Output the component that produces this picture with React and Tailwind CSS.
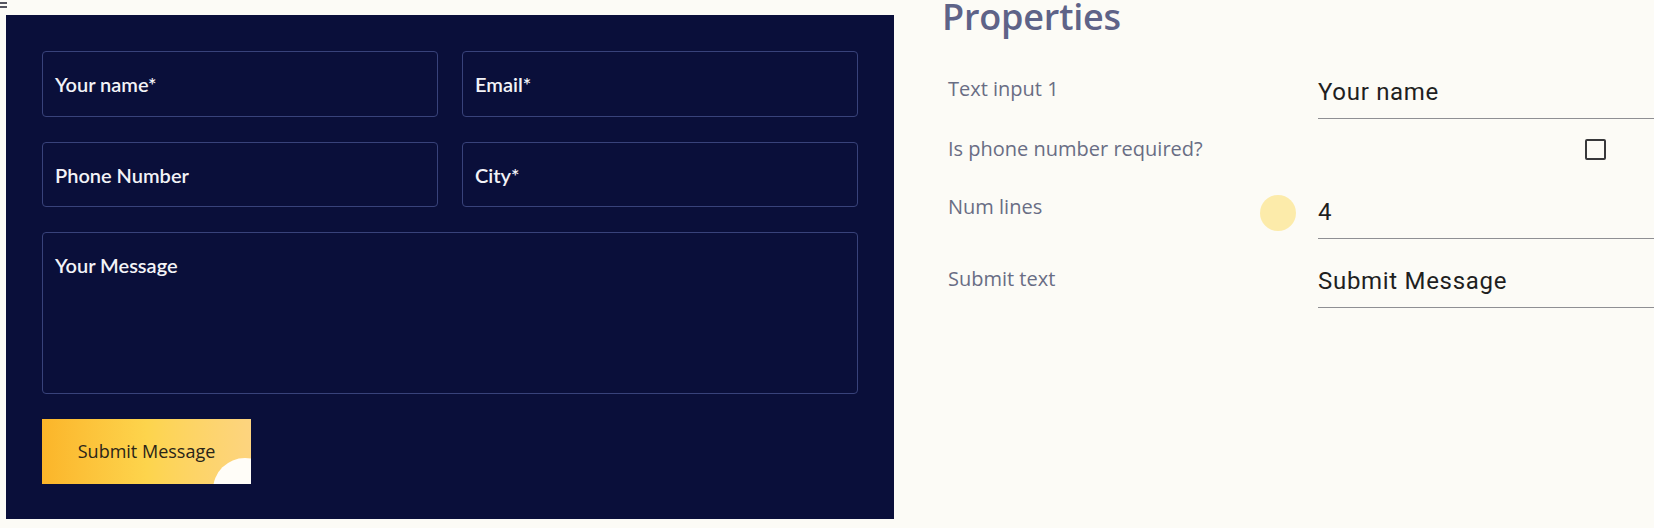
import React from 'react';

const formFont = { fontFamily: 'Lato, "Open Sans", sans-serif' };
const plexLike = { fontFamily: '"Open Sans", "Noto Sans", sans-serif' };
const valueFont = { fontFamily: 'Roboto, "Liberation Sans", sans-serif' };

function FieldBox({ label, className }) {
  return (
    <div
      className={`flex items-center border border-[#38427a] rounded-[4px] pl-[12px] text-[20px] leading-[24px] font-semibold text-[#f3f3f7] ${className}`}
      style={formFont}
    >
      {label}
    </div>
  );
}

function PropRow({ label, labelPt, valuePt, children, plain }) {
  return (
    <div className="grid grid-cols-[376px_1fr]">
      <div
        className="text-[20px] leading-[28px] text-[#696d84] pl-[6px]"
        style={{ ...plexLike, paddingTop: labelPt }}
      >
        {label}
      </div>
      {plain ? (
        children
      ) : (
        <div
          className="pb-[12px] border-b border-[#8f8f93] text-[24px] leading-[28px] tracking-[0.7px] text-[#1f1f1f]"
          style={{ ...valueFont, paddingTop: valuePt }}
        >
          {children}
        </div>
      )}
    </div>
  );
}

export default function App() {
  return (
    <div className="relative flex w-[1654px] h-[528px] overflow-hidden bg-[#fcfbf6]">
      {/* cut-off menu glyph */}
      <div className="absolute left-0 top-[2px] flex flex-col gap-[2px]">
        <div className="w-[7px] h-[2px] bg-[#55555f]" />
        <div className="w-[7px] h-[2px] bg-[#55555f]" />
      </div>

      {/* form preview */}
      <div className="ml-[6px] mt-[15px] w-[888px] h-[504px] shrink-0 bg-[#0a0f3a] p-[36px]">
        <div className="grid grid-cols-2 gap-x-[24px]">
          <FieldBox label="Your name*" className="h-[66px]" />
          <FieldBox label="Email*" className="h-[66px]" />
          <FieldBox label="Phone Number" className="h-[65px] mt-[25px]" />
          <FieldBox label="City*" className="h-[65px] mt-[25px]" />
        </div>
        <div
          className="mt-[25px] h-[162px] border border-[#38427a] rounded-[4px] pl-[12px] pt-[20px] text-[20px] leading-[24px] font-semibold text-[#f3f3f7]"
          style={formFont}
        >
          Your Message
        </div>
        <button
          className="relative mt-[25px] w-[209px] h-[65px] overflow-hidden bg-linear-to-r from-[#fbb529] via-[#fdd44c] to-[#fdd47f] text-[18px] font-medium text-[#2a2518]"
          style={plexLike}
        >
          <span className="relative z-10">Submit Message</span>
          <span className="absolute left-[171px] top-[39px] w-[64px] h-[64px] rounded-full bg-white opacity-95" />
        </button>
      </div>

      {/* properties panel */}
      <div className="relative flex-1 pl-[48px]">
        <div className="h-[62px]">
          <h2
            className="text-[36px] leading-[34px] font-semibold tracking-[-0.2px] text-[#5e6388]"
            style={plexLike}
          >
            Properties
          </h2>
        </div>
        <PropRow label="Text input 1" labelPt="13px" valuePt="16px">
          Your name
        </PropRow>
        <PropRow label="Is phone number required?" labelPt="16px" plain>
          <div className="h-[63px] flex justify-end pr-[48px] pt-[20px]">
            <div className="w-[21px] h-[21px] border-2 border-[#38383a] rounded-[2px]" />
          </div>
        </PropRow>
        <PropRow label="Num lines" labelPt="11px" valuePt="16px">
          4
        </PropRow>
        <PropRow label="Submit text" labelPt="26px" valuePt="28px">
          Submit Message
        </PropRow>
        <div className="absolute left-[366px] top-[195px] w-[36px] h-[36px] rounded-full bg-[#fcebaa]" />
      </div>
    </div>
  );
}
